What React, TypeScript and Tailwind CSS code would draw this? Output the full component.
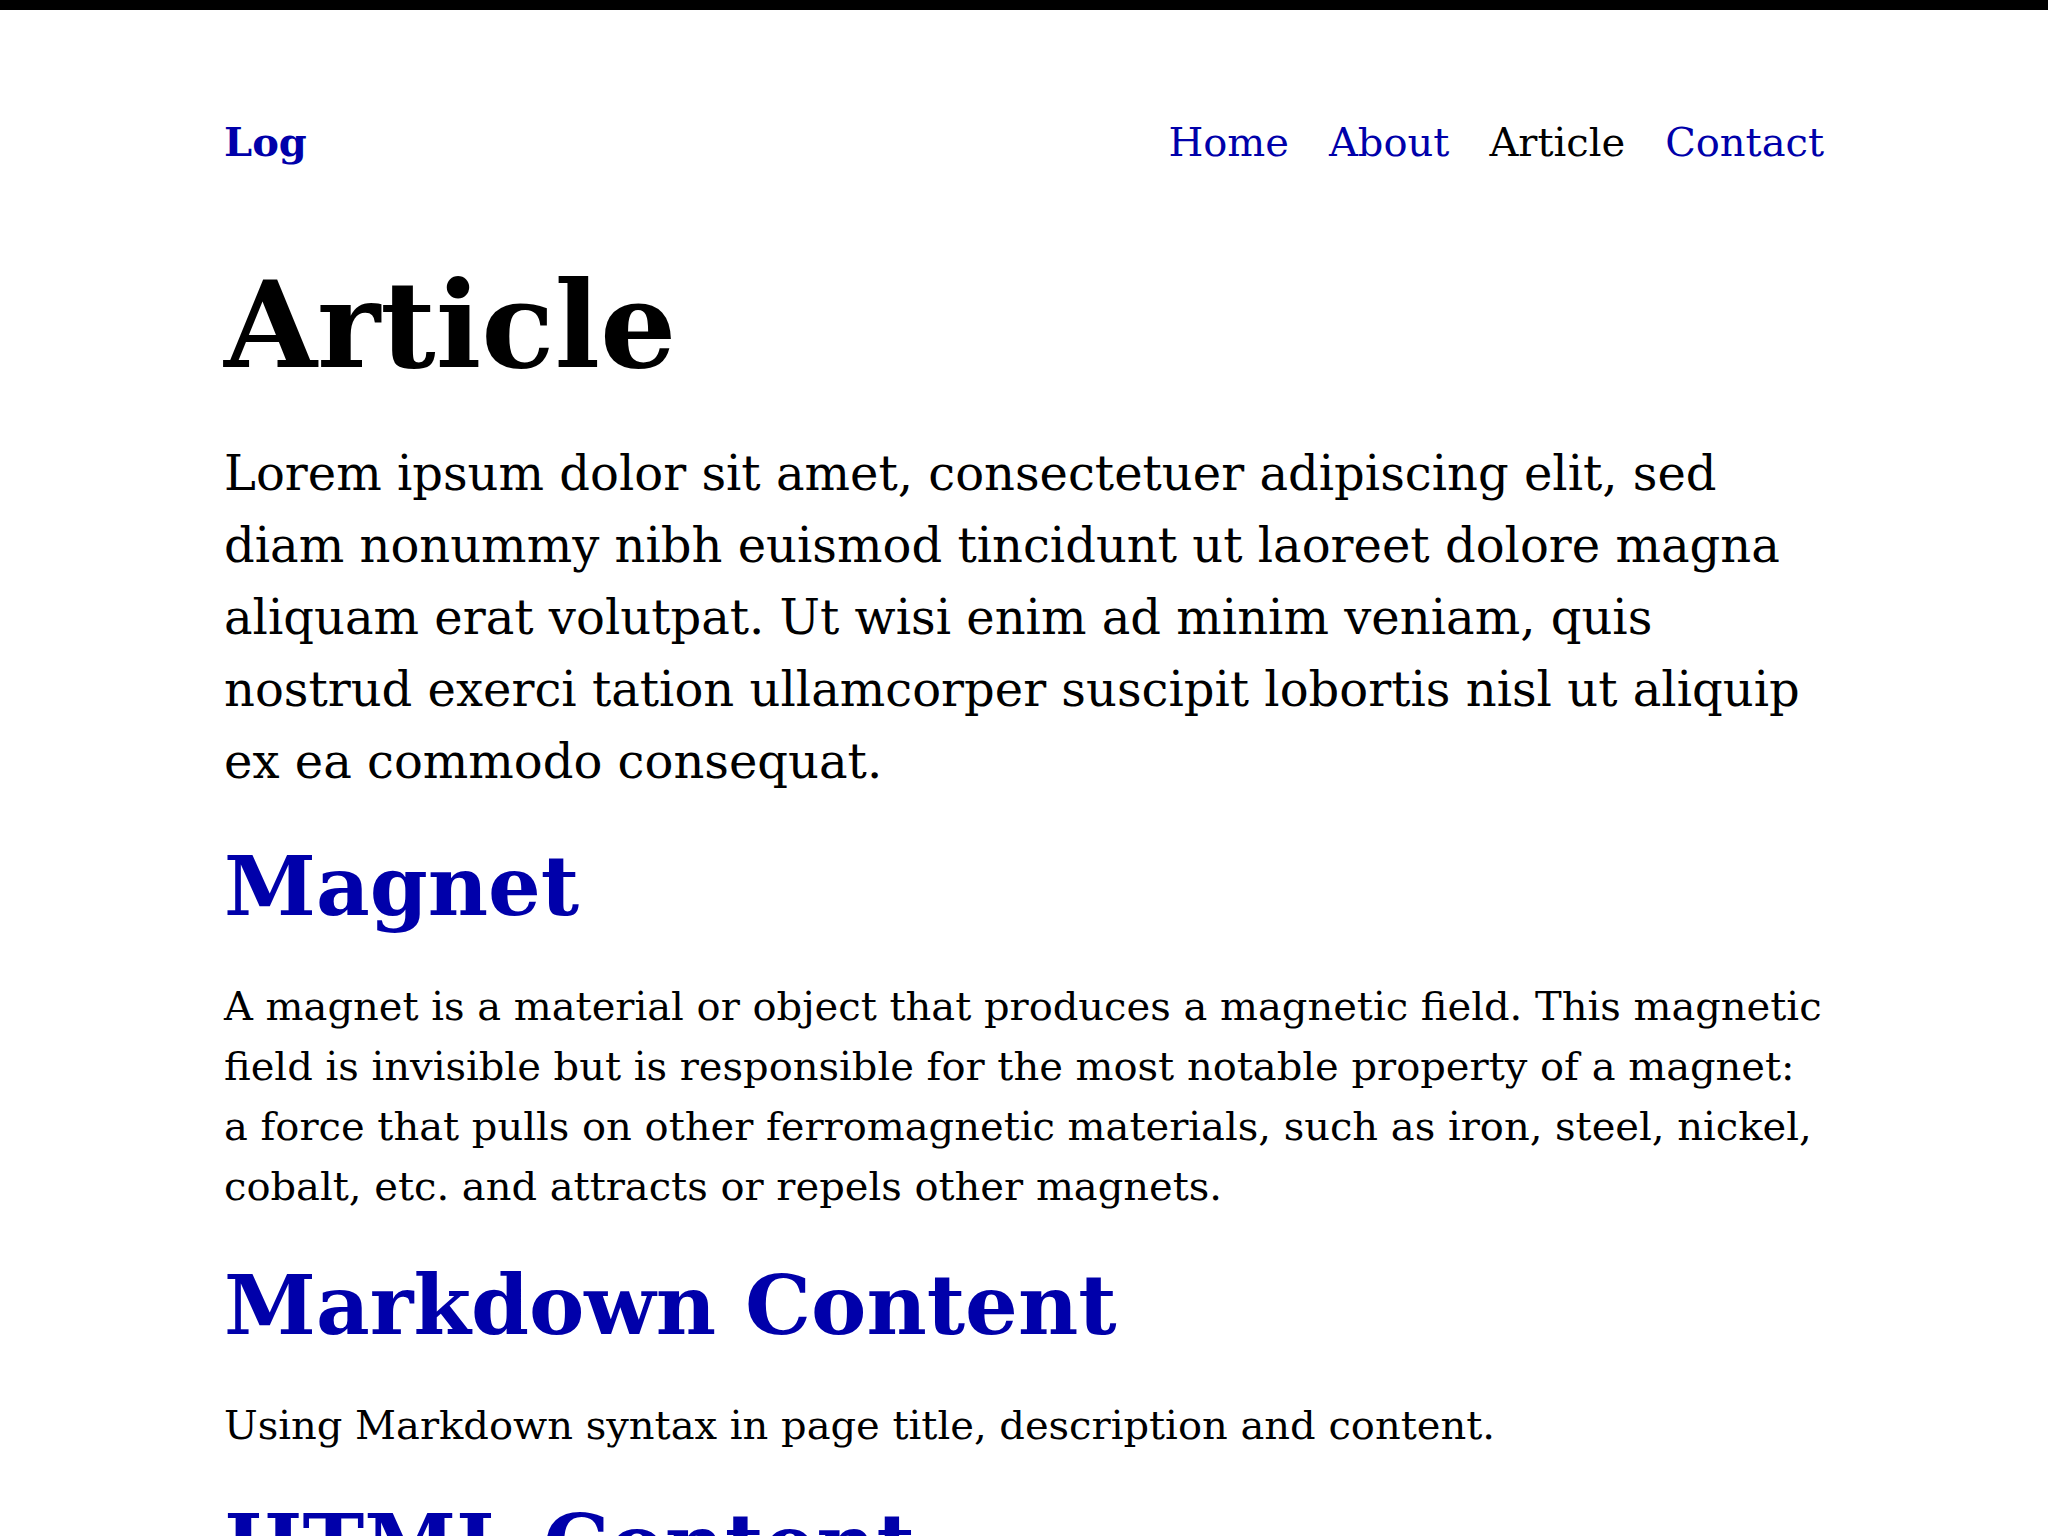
export default function App() {
  const font = { fontFamily: '"DejaVu Serif", serif' };
  return (
    <div className="min-h-screen bg-white border-t-[10px] border-black text-black" style={font}>
      <div className="mx-auto w-[1600px]">
        <header className="flex items-center justify-between pt-[102px] text-[40px] leading-[60px]">
          <a className="font-bold text-[#0000aa]">Log</a>
          <nav className="flex gap-[40px]">
            <a className="text-[#0000aa]">Home</a>
            <a className="text-[#0000aa]">About</a>
            <span className="text-black">Article</span>
            <a className="text-[#0000aa]">Contact</a>
          </nav>
        </header>
        <h1 className="mt-[81px] text-[120px] leading-[1.2] font-bold">Article</h1>
        <p className="mt-[40px] text-[48px] leading-[72px]">
          Lorem ipsum dolor sit amet, consectetuer adipiscing elit, sed diam nonummy nibh euismod tincidunt ut laoreet dolore magna aliquam erat volutpat. Ut wisi enim ad minim veniam, quis nostrud exerci tation ullamcorper suscipit lobortis nisl ut aliquip ex ea commodo consequat.
        </p>
        <h2 className="mt-[40px] text-[83px] leading-[1.2] font-bold text-[#0000aa]">Magnet</h2>
        <p className="mt-[39px] text-[40px] leading-[60px]">
          A magnet is a material or object that produces a magnetic field. This magnetic field is invisible but is responsible for the most notable property of a magnet: a force that pulls on other ferromagnetic materials, such as iron, steel, nickel, cobalt, etc. and attracts or repels other magnets.
        </p>
        <h2 className="mt-[40px] text-[83px] leading-[1.2] font-bold text-[#0000aa]">Markdown Content</h2>
        <p className="mt-[40px] text-[40px] leading-[60px]">
          Using Markdown syntax in page title, description and content.
        </p>
        <h2 className="mt-[40px] text-[83px] leading-[1.2] font-bold text-[#0000aa]">HTML Content</h2>
        <p className="mt-[40px] text-[40px] leading-[60px]">
          Using HTML in page content.
        </p>
      </div>
    </div>
  );
}
